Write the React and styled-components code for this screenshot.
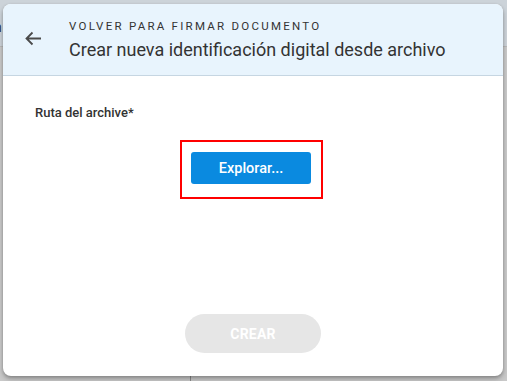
import React from 'react'
import styled, { createGlobalStyle } from 'styled-components'

const GlobalStyle = createGlobalStyle`
	html, body {
		margin: 0;
		padding: 0;
		height: 100%;
		overflow: hidden;
	}
	body {
		font-family: Roboto, 'Liberation Sans', Arial, sans-serif;
		background: #cbcbcb;
	}
`

const Screen = styled.div`
	position: relative;
	width: 507px;
	height: 381px;
	overflow: hidden;
	background: #c9c9c9;
`

const BackPage = styled.div`
	position: absolute;
	inset: 0;
	display: flex;
	flex-direction: column;
`

const BackHeader = styled.div`
	height: 46px;
	background: #ccd3d9;
	border-bottom: 1px solid #b9b9b9;
	display: flex;
	align-items: center;
	font-size: 14px;
	color: #333;
`

const BackText = styled.span`
	margin-left: -6px;
	margin-top: 8px;
`

const BackBody = styled.div`
	flex: 1;
	display: flex;
`

const BackColumn = styled.div`
	width: 190px;
	border-right: 1px solid #8a8a8a;
`

const Overlay = styled.div`
	position: absolute;
	inset: 0;
	padding: 4px 4px 5px 3px;
	display: flex;
`

const Dialog = styled.div`
	flex: 1;
	display: flex;
	flex-direction: column;
	background: #fff;
	border-radius: 8px;
	overflow: hidden;
	box-shadow: 0 3px 5px rgba(0, 0, 0, 0.25), 0 1px 3px rgba(0, 0, 0, 0.15);
`

const Header = styled.div`
	height: 71px;
	background: #e8f4fd;
	border-bottom: 1px solid #c6d6e2;
	display: flex;
	align-items: center;
`

const BackButton = styled.button`
	width: 60px;
	height: 40px;
	border: none;
	background: none;
	padding: 0;
	display: flex;
	align-items: center;
	justify-content: center;
	margin-bottom: 2px;
	color: #4a4a4a;
	cursor: pointer;
`

const Titles = styled.div`
	display: flex;
	flex-direction: column;
	margin-left: 6px;
`

const Kicker = styled.div`
	font-size: 11.5px;
	letter-spacing: 2.25px;
	color: #333;
	line-height: 14px;
`

const Title = styled.div`
	font-size: 18px;
	color: #333;
	line-height: 22px;
	margin-top: 6px;
`

const Body = styled.div`
	flex: 1;
	display: flex;
	flex-direction: column;
	padding: 28px 32px 0;
`

const Label = styled.div`
	font-size: 13px;
	font-weight: 500;
	color: #333;
	line-height: 16px;
	margin-top: 1px;
`

const Highlight = styled.div`
	align-self: center;
	margin-top: 19px;
	margin-right: 3px;
	border: 2px solid #ff0000;
	padding: 10px 10px 13px 9px;
`

const BrowseButton = styled.button`
	display: block;
	width: 120px;
	height: 32px;
	border: none;
	border-radius: 3px;
	background: #0a8ae0;
	color: #fff;
	font-family: inherit;
	font-size: 14.5px;
	font-weight: 500;
	cursor: pointer;
`

const Footer = styled.div`
	margin-top: auto;
	display: flex;
	justify-content: center;
	padding: 0 0 23px;
`

const CreateButton = styled.button`
	width: 136px;
	height: 39px;
	border: none;
	border-radius: 20px;
	background: #e6e6e6;
	color: #fff;
	font-family: inherit;
	font-size: 14px;
	font-weight: 700;
	letter-spacing: 0.2px;
`

const ArrowIcon = () => (
	<svg width='18' height='15' viewBox='0 0 18 15' fill='none'>
		<path
			d='M17 7.5H2.5M8.5 1.5L2.5 7.5L8.5 13.5'
			stroke='currentColor'
			strokeWidth='1.8'
		/>
	</svg>
)

export default function App() {
	return (
		<>
			<GlobalStyle />
			<Screen>
				<BackPage>
					<BackHeader>
						<BackText>n</BackText>
					</BackHeader>
					<BackBody>
						<BackColumn />
					</BackBody>
				</BackPage>
				<Overlay>
					<Dialog>
						<Header>
							<BackButton aria-label='Volver'>
								<ArrowIcon />
							</BackButton>
							<Titles>
								<Kicker>VOLVER PARA FIRMAR DOCUMENTO</Kicker>
								<Title>Crear nueva identificación digital desde archivo</Title>
							</Titles>
						</Header>
						<Body>
							<Label>Ruta del archive*</Label>
							<Highlight>
								<BrowseButton>Explorar...</BrowseButton>
							</Highlight>
							<Footer>
								<CreateButton disabled>CREAR</CreateButton>
							</Footer>
						</Body>
					</Dialog>
				</Overlay>
			</Screen>
		</>
	)
}
